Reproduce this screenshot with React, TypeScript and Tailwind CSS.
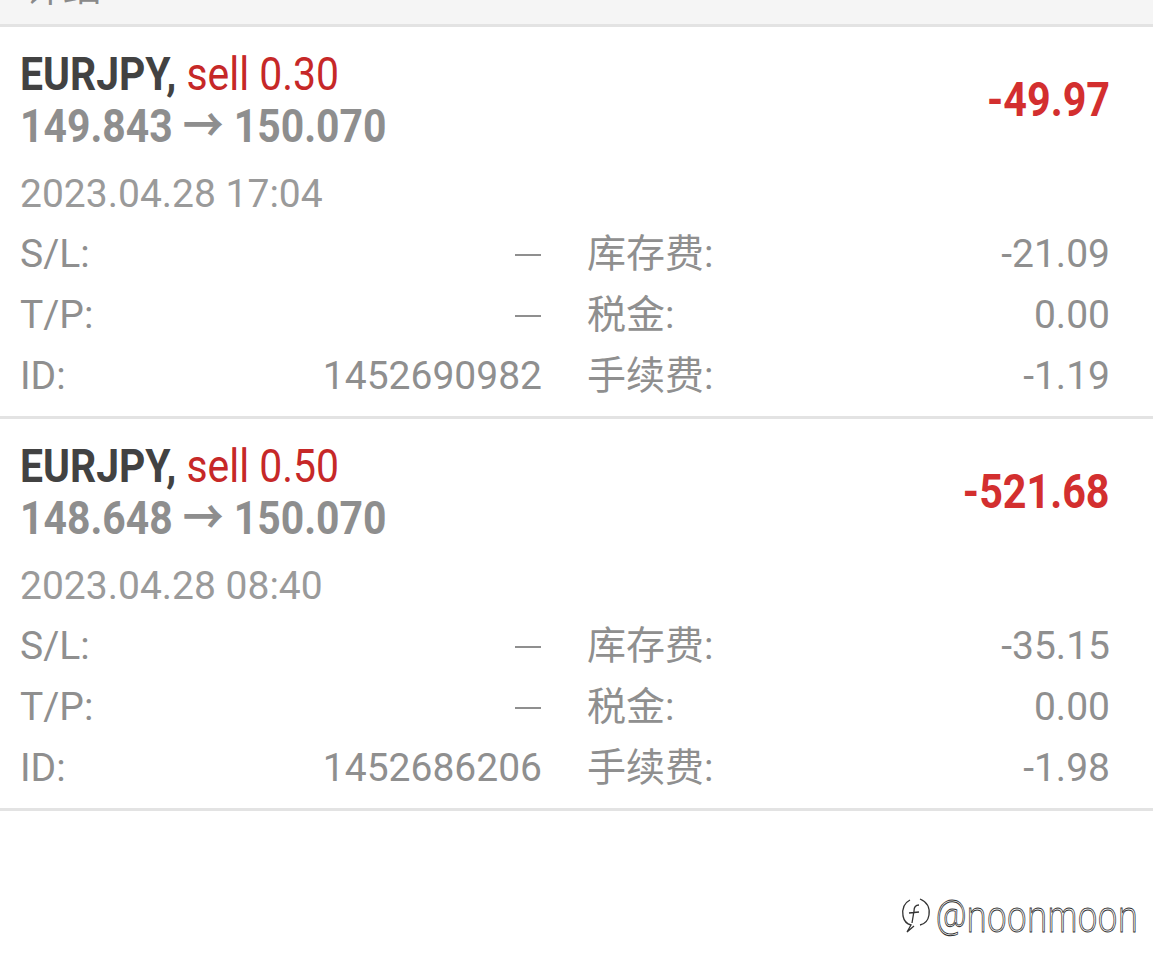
import React from "react";

type Trade = {
  sym: string;
  side: string;
  open: string;
  close: string;
  profit: string;
  time: string;
  id: string;
  swap: string;
  tax: string;
  fee: string;
};

const trades: Trade[] = [
  { sym: "EURJPY,", side: "sell 0.30", open: "149.843", close: "150.070", profit: "-49.97", time: "2023.04.28 17:04", id: "1452690982", swap: "-21.09", tax: "0.00", fee: "-1.19" },
  { sym: "EURJPY,", side: "sell 0.50", open: "148.648", close: "150.070", profit: "-521.68", time: "2023.04.28 08:40", id: "1452686206", swap: "-35.15", tax: "0.00", fee: "-1.98" },
];

function Dash() {
  return (
    <span className="flex items-center h-full">
      <span className="block w-[26px] h-[2px] bg-[#8f8f8f] mr-[1px]" />
    </span>
  );
}

function Row({ l1, v1, l2, v2 }: { l1: string; v1: React.ReactNode; l2: string; v2: string }) {
  return (
    <div className="grid grid-cols-[522px_523px] gap-x-[45px] h-[61px] leading-[61px] text-[39px] text-[#8f8f8f]">
      <div className="flex justify-between">
        <span>{l1}</span>
        {v1}
      </div>
      <div className="flex justify-between">
        <span>{l2}</span>
        <span>{v2}</span>
      </div>
    </div>
  );
}

function Item({ t }: { t: Trade }) {
  return (
    <div className="pl-[20px] pr-[43px] pt-[21px] pb-[9px] border-b-[3px] border-[#e3e3e3]">
      <div className="flex items-center justify-between">
        <div className="origin-left scale-x-[0.87] whitespace-nowrap">
          <div className="text-[47px] leading-[52px] font-bold text-[#424242]">
            {t.sym} <span className="font-normal text-[#c62828]">{t.side}</span>
          </div>
          <div className="text-[47px] leading-[52px] font-bold text-[#8e8e8e]">
            {t.open} → {t.close}
          </div>
        </div>
        <div className="origin-right scale-x-[0.86] text-[48px] font-bold text-[#d32f2f] leading-[52px] whitespace-nowrap">
          {t.profit}
        </div>
      </div>
      <div className="mt-[12px] h-[60px] leading-[60px] text-[39px] text-[#9a9a9a]">{t.time}</div>
      <Row l1="S/L:" v1={<Dash />} l2="库存费:" v2={t.swap} />
      <Row l1="T/P:" v1={<Dash />} l2="税金:" v2={t.tax} />
      <Row l1="ID:" v1={<span>{t.id}</span>} l2="手续费:" v2={t.fee} />
    </div>
  );
}

export default function App() {
  return (
    <div
      className="relative w-[1153px] min-h-[965px] bg-white overflow-hidden"
      style={{ fontFamily: "Roboto, 'Noto Sans CJK SC', sans-serif" }}
    >
      <div className="h-[27px] bg-[#f5f5f5] border-b-[3px] border-[#e3e3e3] overflow-hidden">
        <div className="pl-[25px] mt-[-31px] text-[38px] leading-[38px] text-[#8a8a8a]">详细</div>
      </div>
      {trades.map((t, i) => (
        <Item key={i} t={t} />
      ))}
      <div className="absolute left-[898px] top-[893px] flex items-center text-white">
        <svg width="36" height="42" viewBox="0 0 36 42" fill="none" stroke="#333" strokeWidth="1.3">
          <path d="M12 6 C6 9 4 15 5 22 C6 27 9 30 13 31 L9 38 L16 32" />
          <path d="M22 5 C29 8 32 14 31 21 C30 27 27 30 22 31" />
          <path d="M21 11 C17 11 16 14 16 17 L14 29 M11 19 L21 18" />
        </svg>
        <span
          className="inline-block origin-left scale-x-[0.78] ml-[2px] text-[44px] leading-[44px] [-webkit-text-stroke:0.9px_#333]"
          style={{ fontFamily: "'Open Sans', sans-serif", fontWeight: 300 }}
        >
          @noonmoon
        </span>
      </div>
    </div>
  );
}
